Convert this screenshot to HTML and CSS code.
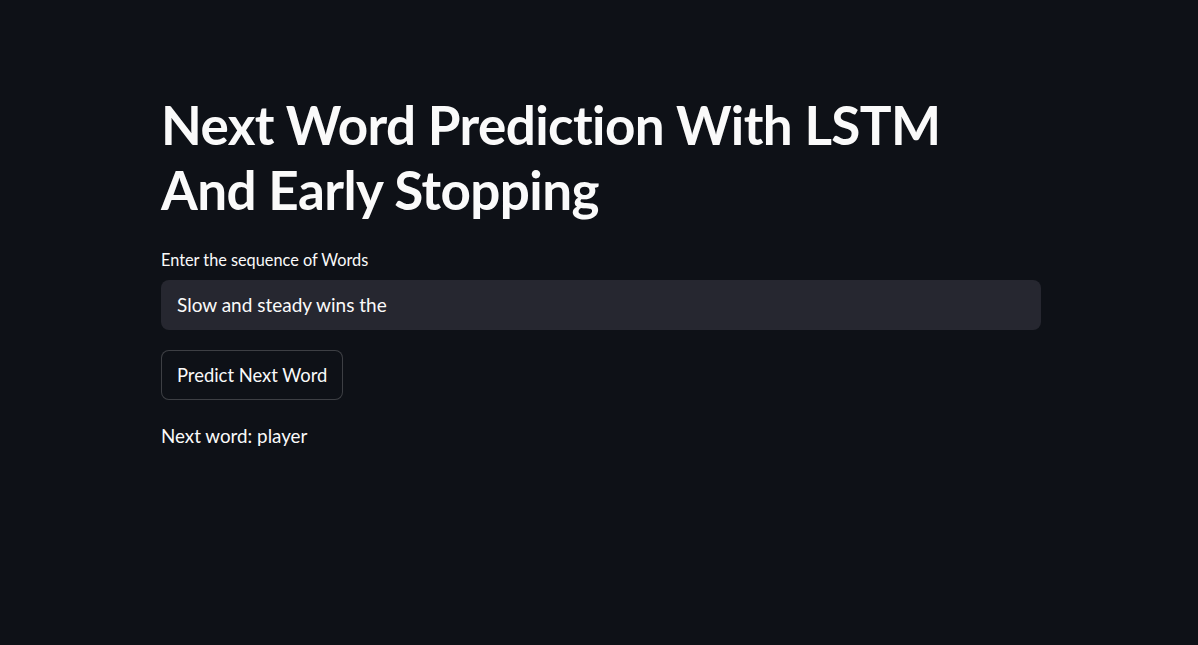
FILE: index.html
```html
<!DOCTYPE html>
<html>
<head>
<meta charset="utf-8">
<link rel="stylesheet" href="styles.css">
</head>
<body>
<main class="app">
  <h1 class="title">Next Word Prediction With LSTM And Early Stopping</h1>
  <label class="label" for="seq">Enter the sequence of Words</label>
  <input class="text-input" id="seq" type="text" value="Slow and steady wins the">
  <button class="btn">Predict Next Word</button>
  <p class="result">Next word: player</p>
</main>
</body>
</html>
```

FILE: styles.css
```css
html, body {
  margin: 0;
  padding: 0;
  background: #0e1117;
  color: #fafafa;
  font-family: Lato, "Noto Sans", sans-serif;
  height: 100%;
}
.app {
  width: 880px;
  margin-left: calc(50% - 438px);
  padding-top: 92px;
  display: flex;
  flex-direction: column;
  align-items: flex-start;
}
.title {
  margin: 0;
  font-size: 53px;
  line-height: 65px;
  font-weight: 700;
  width: 800px;
  letter-spacing: -0.6px;
}
.label {
  margin-top: 28px;
  font-size: 16.3px;
  line-height: 20px;
}
.text-input {
  box-sizing: border-box;
  margin-top: 10px;
  width: 880px;
  height: 50px;
  border: none;
  border-radius: 8px;
  background: #262730;
  color: #fafafa;
  font-family: inherit;
  font-size: 19px;
  padding: 0 16px 2px;
  outline: none;
}
.btn {
  margin-top: 20px;
  box-sizing: border-box;
  height: 50px;
  padding: 0 15px;
  border: 1px solid rgba(250,250,250,0.2);
  border-radius: 8px;
  background: #0e1117;
  color: #fafafa;
  font-family: inherit;
  font-size: 18.4px;
}
.result {
  margin: 24px 0 0;
  font-size: 18.8px;
  line-height: 24px;
}
```
